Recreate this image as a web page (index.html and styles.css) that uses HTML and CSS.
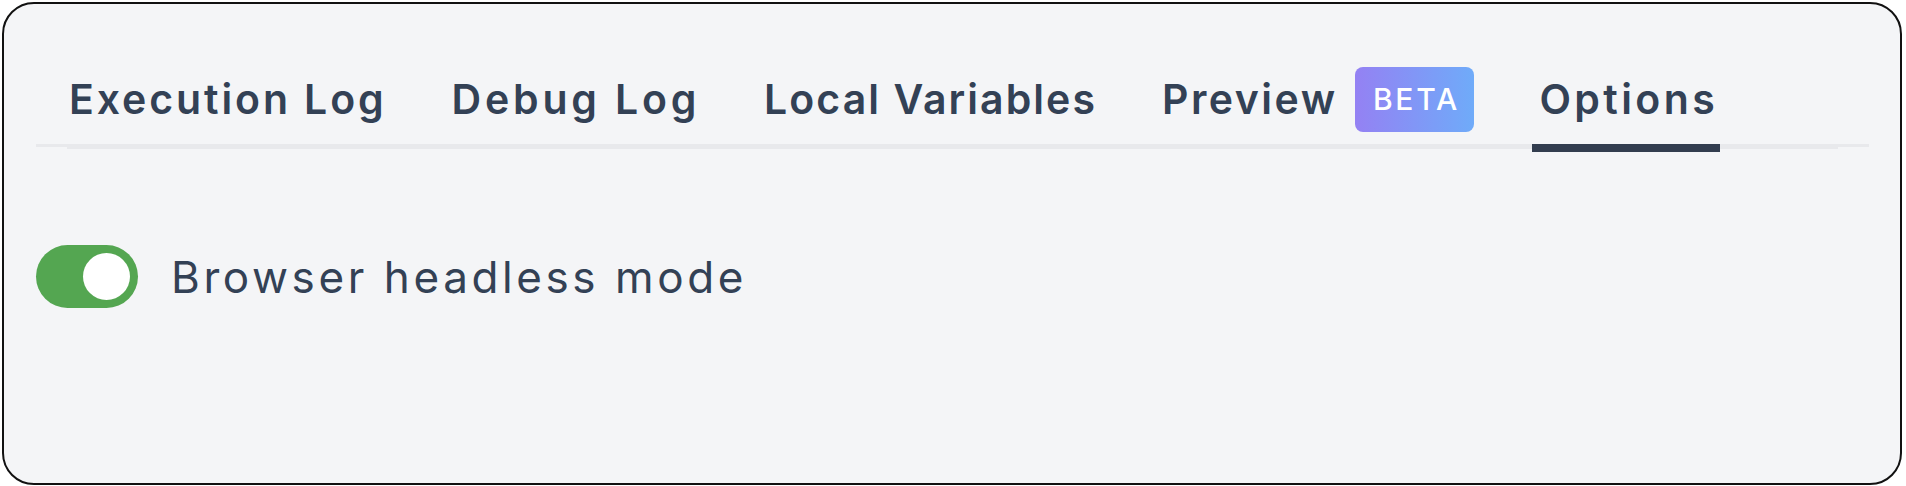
FILE: index.html
```html
<!DOCTYPE html>
<html lang="en">
<head>
<meta charset="utf-8">
<title>Options</title>
<link rel="stylesheet" href="styles.css">
</head>
<body>
<div class="panel">
  <div class="tabs">
    <div class="tab tab-exec">Execution Log</div>
    <div class="tab tab-debug">Debug Log</div>
    <div class="tab tab-vars">Local Variables</div>
    <div class="tab tab-preview">Preview <span class="badge">BETA</span></div>
    <div class="tab tab-options active">Options</div>
  </div>
  <div class="option-row">
    <div class="toggle on"><span class="knob"></span></div>
    <span class="option-label">Browser headless mode</span>
  </div>
</div>
</body>
</html>
```

FILE: styles.css
```css
html, body {
  margin: 0;
  padding: 0;
  background: #ffffff;
}

body {
  font-family: "Inter", "Noto Sans", sans-serif;
  color: #334155;
}

.panel {
  box-sizing: border-box;
  margin: 2px;
  width: 1900px;
  height: 483px;
  border: 2px solid #111111;
  border-radius: 32px;
  background: #f4f5f7;
  padding: 70px 31px 0 32px;
}

.tabs {
  display: flex;
  align-items: flex-start;
  gap: 51px;
  padding-left: 26px;
  background-image: linear-gradient(#e8e9ec, #e8e9ec), linear-gradient(#e8e9ec, #e8e9ec);
  background-repeat: no-repeat;
  background-size: 100% 3px, calc(100% - 62px) 5px;
  background-position: 0 calc(100% - 5px), 31px calc(100% - 3px);
}

.tab {
  display: flex;
  align-items: center;
  height: 50px;
  padding: 0 7px 20px;
  border-bottom: 8px solid transparent;
  font-size: 41px;
  font-weight: 600;
  line-height: 50px;
  letter-spacing: 3px;
  white-space: pre;
}

.tab-exec { letter-spacing: 2.9px; }
.tab-debug { letter-spacing: 3.8px; }
.tab-vars { letter-spacing: 2.05px; margin-left: -1px; }
.tab-preview { letter-spacing: 2.5px; }
.tab-options { letter-spacing: 3.4px; padding-right: 2px; }

.tab.active {
  border-bottom-color: #323d4f;
}

.badge {
  display: inline-flex;
  align-items: center;
  justify-content: center;
  box-sizing: border-box;
  width: 119px;
  height: 65px;
  margin-left: 5px;
  padding-left: 3px;
  border-radius: 8px;
  background: linear-gradient(90deg, #9481f3, #6fabf9);
  color: #ffffff;
  font-size: 30px;
  font-weight: 500;
  letter-spacing: 2.75px;
}

.option-row {
  display: flex;
  align-items: center;
  gap: 33px;
  margin-top: 93px;
}

.toggle {
  box-sizing: border-box;
  display: flex;
  align-items: center;
  justify-content: flex-end;
  width: 102px;
  height: 63px;
  padding: 8px;
  border-radius: 32px;
  background: #54a651;
}

.knob {
  width: 47px;
  height: 47px;
  border-radius: 50%;
  background: #ffffff;
}

.option-label {
  font-size: 44px;
  font-weight: 400;
  line-height: 50px;
  letter-spacing: 3.6px;
}
```
